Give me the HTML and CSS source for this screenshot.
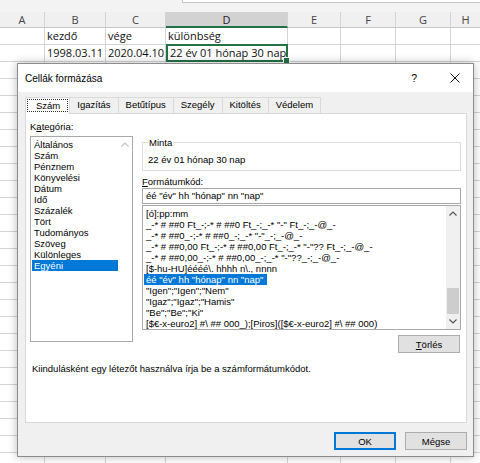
FILE: index.html
```html
<!DOCTYPE html>
<html lang="hu">

<head>
    <meta charset="UTF-8">
    <title>Cellák formázása</title>
    <link rel="stylesheet" href="styles.css">
</head>

<body>

    <div class="sheet">
        <div class="formula-strip">
            <div class="formula-box"></div>
        </div>

        <div class="grid-row heads">
            <div class="head">A</div>
            <div class="head">B</div>
            <div class="head">C</div>
            <div class="head active">D</div>
            <div class="head">E</div>
            <div class="head">F</div>
            <div class="head">G</div>
            <div class="head">H</div>
        </div>

        <div class="grid-row">
            <div class="cell"></div>
            <div class="cell">kezdő</div>
            <div class="cell">vége</div>
            <div class="cell">különbség</div>
            <div class="cell"></div>
            <div class="cell"></div>
            <div class="cell"></div>
            <div class="cell"></div>
        </div>
        <div class="grid-row">
            <div class="cell"></div>
            <div class="cell num">1998.03.11</div>
            <div class="cell num">2020.04.10</div>
            <div class="cell num sel">22 év 01 hónap 30 nap</div>
            <div class="cell"></div>
            <div class="cell"></div>
            <div class="cell"></div>
            <div class="cell"></div>
        </div>

        <div class="grid-row filler">
            <div></div><div></div><div></div><div></div><div></div><div></div><div></div><div></div>
        </div>
    </div>

    <div class="dialog">
        <div class="titlebar">
            <span class="title">Cellák formázása</span>
            <span class="help">?</span>
            <svg class="close" width="10" height="10" viewBox="0 0 10 10">
                <path d="M0.5 0.5 L9.5 9.5 M9.5 0.5 L0.5 9.5" stroke="#111" stroke-width="1" fill="none" />
            </svg>
        </div>

        <div class="dlg-body">
            <div class="tabs">
                <div class="tab active"><span class="focus">Szám</span></div>
                <div class="tab">Igazítás</div>
                <div class="tab">Betűtípus</div>
                <div class="tab">Szegély</div>
                <div class="tab">Kitöltés</div>
                <div class="tab">Védelem</div>
            </div>

            <div class="panel">
                <div class="cols">
                    <div class="cat-col">
                        <div class="label">K<u>a</u>tegória:</div>
                        <div class="listbox cat-list">
                            <ul class="items">
                                <li>Általános</li>
                                <li>Szám</li>
                                <li>Pénznem</li>
                                <li>Könyvelési</li>
                                <li>Dátum</li>
                                <li>Idő</li>
                                <li>Százalék</li>
                                <li>Tört</li>
                                <li>Tudományos</li>
                                <li>Szöveg</li>
                                <li>Különleges</li>
                                <li class="picked">Egyéni</li>
                            </ul>
                            <div class="vscroll off">
                                <svg class="arrow" width="8" height="5" viewBox="0 0 8 5">
                                    <path d="M0.5 4.5 L4 1 L7.5 4.5" stroke="#c4c4c4" stroke-width="1.2" fill="none" />
                                </svg>
                            </div>
                        </div>
                    </div>

                    <div class="fmt-col">
                        <fieldset class="sample">
                            <legend>Minta</legend>
                            <div>22 év 01 hónap 30 nap</div>
                        </fieldset>

                        <div class="label fmt-label"><u>F</u>ormátumkód:</div>
                        <div class="textbox">éé "év" hh "hónap" nn "nap"</div>

                        <div class="listbox fmt-list">
                            <ul class="items">
                                <li>[ó]:pp:mm</li>
                                <li>_-* # ##0 Ft_-;-* # ##0 Ft_-;_-* "-" Ft_-;_-@_-</li>
                                <li>_-* # ##0_-;-* # ##0_-;_-* "-"_-;_-@_-</li>
                                <li>_-* # ##0,00 Ft_-;-* # ##0,00 Ft_-;_-* "-"?? Ft_-;_-@_-</li>
                                <li>_-* # ##0,00_-;-* # ##0,00_-;_-* "-"??_-;_-@_-</li>
                                <li>[$-hu-HU]éééé\. hhhh n\., nnnn</li>
                                <li class="picked">éé "év" hh "hónap" nn "nap"</li>
                                <li>"Igen";"Igen";"Nem"</li>
                                <li>"Igaz";"Igaz";"Hamis"</li>
                                <li>"Be";"Be";"Ki"</li>
                                <li>[$€-x-euro2] #\ ## 000_);[Piros]([$€-x-euro2] #\ ## 000)</li>
                            </ul>
                            <div class="vscroll">
                                <svg class="arrow" width="8" height="5" viewBox="0 0 8 5">
                                    <path d="M0.5 4.5 L4 1 L7.5 4.5" stroke="#555" stroke-width="1.2" fill="none" />
                                </svg>
                                <div class="track"><div class="thumb"></div></div>
                                <svg class="arrow" width="8" height="5" viewBox="0 0 8 5">
                                    <path d="M0.5 0.5 L4 4 L7.5 0.5" stroke="#555" stroke-width="1.2" fill="none" />
                                </svg>
                            </div>
                        </div>

                        <div class="del-row">
                            <button class="btn"><u>T</u>örlés</button>
                        </div>
                    </div>
                </div>

                <p class="hint">Kiindulásként egy létezőt használva írja be a számformátumkódot.</p>
            </div>

            <div class="footer">
                <button class="btn default">OK</button>
                <button class="btn">Mégse</button>
            </div>
        </div>
    </div>

</body>

</html>
```

FILE: styles.css
```css
* {
    box-sizing: border-box;
}

body {
    margin: 0;
    width: 480px;
    height: 463px;
    overflow: hidden;
    background-color: #fff;
    font-family: "Open Sans", "Noto Sans", sans-serif;
    position: relative;
}

/* spreadsheet behind the dialog */

.formula-strip {
    height: 12px;
    background-color: #f3f3f3;
    padding-left: 182px;
}

.formula-box {
    height: 3px;
    background-color: #fff;
    border-left: 1px solid #c6c6c6;
    border-bottom: 1px solid #c6c6c6;
}

.grid-row {
    display: grid;
    grid-template-columns: 45px 61px 60px 122px 53px 55px 55px 30px;
}

.head {
    height: 16px;
    background-color: #f0f0f0;
    border-right: 1px solid #d4d4d4;
    border-bottom: 1px solid #c6c6c6;
    color: #444;
    font-size: 11px;
    line-height: 15px;
    text-align: center;
}

.head.active {
    background-color: #d2d2d2;
    border-bottom: 2px solid #217346;
    color: #222;
}

.cell {
    height: 17px;
    border-right: 1px solid #d4d4d4;
    border-bottom: 1px solid #d4d4d4;
    font-size: 11px;
    line-height: 16px;
    padding: 0 2px;
    white-space: nowrap;
    color: #111;
}

.cell.num {
    text-align: right;
}

.cell.sel {
    position: relative;
    border: 2px solid #217346;
    margin-top: -1px;
    height: 18px;
    line-height: 14px;
}

.cell.sel::after {
    content: "";
    position: absolute;
    right: -4px;
    bottom: -4px;
    width: 5px;
    height: 5px;
    background-color: #217346;
    border: 1px solid #fff;
}

.filler {
    height: 401px;
    background-image: repeating-linear-gradient(to bottom, transparent 0, transparent 16px, #d4d4d4 16px, #d4d4d4 17px);
}

.filler div {
    border-right: 1px solid #d4d4d4;
}

/* dialog */

.dialog {
    position: absolute;
    left: 17px;
    top: 63px;
    width: 457px;
    height: 394px;
    border: 1px solid #8c8c8c;
    background-color: #f0f0f0;
    box-shadow: 0 0 9px rgba(0, 0, 0, 0.28);
    font-family: "Liberation Sans", Arial, sans-serif;
    font-size: 9.5px;
    color: #000;
    display: flex;
    flex-direction: column;
}

.titlebar {
    height: 28px;
    background-color: #fff;
    display: flex;
    align-items: center;
    padding-left: 7px;
    font-size: 10px;
}

.title {
    flex: 1;
}

.help {
    margin-right: 33px;
    font-size: 10.5px;
}

.close {
    margin-right: 13px;
}

.dlg-body {
    flex: 1;
    padding: 5px 6px 0 7px;
}

.tabs {
    display: flex;
    height: 16px;
    padding-left: 1px;
}

.tab {
    height: 16px;
    padding: 0 7px;
    margin-left: -1px;
    border: 1px solid #d9d9d9;
    border-bottom: none;
    background-color: #f0f0f0;
    line-height: 14px;
    white-space: nowrap;
}

.tab.active {
    background-color: #fff;
    height: 17px;
    margin-bottom: -1px;
    padding: 1px 1px 0;
}

.focus {
    display: block;
    padding: 0 7px 0 8px;
    border: 1px dotted #333;
    line-height: 11px;
}

.panel {
    height: 310px;
    background-color: #fff;
    border: 1px solid #d9d9d9;
    padding: 7px 5px 0 4px;
}

.cols {
    display: grid;
    grid-template-columns: 103px 319px;
    column-gap: 9px;
    align-items: start;
}

.label {
    line-height: 12px;
}

.listbox {
    border: 1px solid #a8a8a8;
    display: flex;
    background-color: #fff;
}

.items {
    list-style: none;
    margin: 0;
    padding: 2px 0 0 1px;
    flex: 1;
    min-width: 0;
    overflow: hidden;
}

.items li {
    line-height: 11px;
    height: 11px;
    padding-left: 2px;
    white-space: nowrap;
}

.items li.picked {
    background-color: #0078d7;
    color: #fff;
}

.fmt-list li.picked {
    width: fit-content;
    padding-right: 4px;
}

.cat-list {
    margin-top: 3px;
    height: 206px;
}

.vscroll {
    width: 14px;
    display: flex;
    flex-direction: column;
    align-items: center;
    background-color: #f0f0f0;
}

.vscroll.off {
    background-color: #fff;
}

.arrow {
    flex: none;
    margin: 5px 0;
}

.track {
    flex: 1;
    width: 100%;
    display: flex;
    flex-direction: column;
    justify-content: flex-end;
    padding: 0 1px;
}

.thumb {
    height: 26px;
    background-color: #cdcdcd;
}

.sample {
    margin: 16px 0 0;
    padding: 6px 5px 5px 5px;
    border: 1px solid #dcdcdc;
    height: 34px;
}

.sample legend {
    padding: 0 1px;
    line-height: 11px;
}

.sample div {
    line-height: 11px;
}

.fmt-label {
    margin-top: 5px;
}

.textbox {
    height: 16px;
    border: 1px solid #a8a8a8;
    line-height: 14px;
    padding-left: 3px;
    white-space: nowrap;
}

.fmt-list {
    margin-top: 1px;
    height: 125px;
}

.fmt-list .items {
    padding-top: 2px;
}

.del-row {
    display: flex;
    justify-content: flex-end;
    margin-top: 5px;
    padding-right: 1px;
}

.btn {
    width: 62px;
    height: 18px;
    padding: 0;
    background-color: #e1e1e1;
    border: 1px solid #adadad;
    font-family: inherit;
    font-size: 9.5px;
    color: #000;
}

.btn.default {
    border-color: #0078d7;
    box-shadow: inset 0 0 0 1px #0078d7;
}

.hint {
    margin: 10px 0 0 2px;
    line-height: 12px;
}

.footer {
    display: flex;
    justify-content: flex-end;
    gap: 9px;
    margin-top: 9px;
}
```
